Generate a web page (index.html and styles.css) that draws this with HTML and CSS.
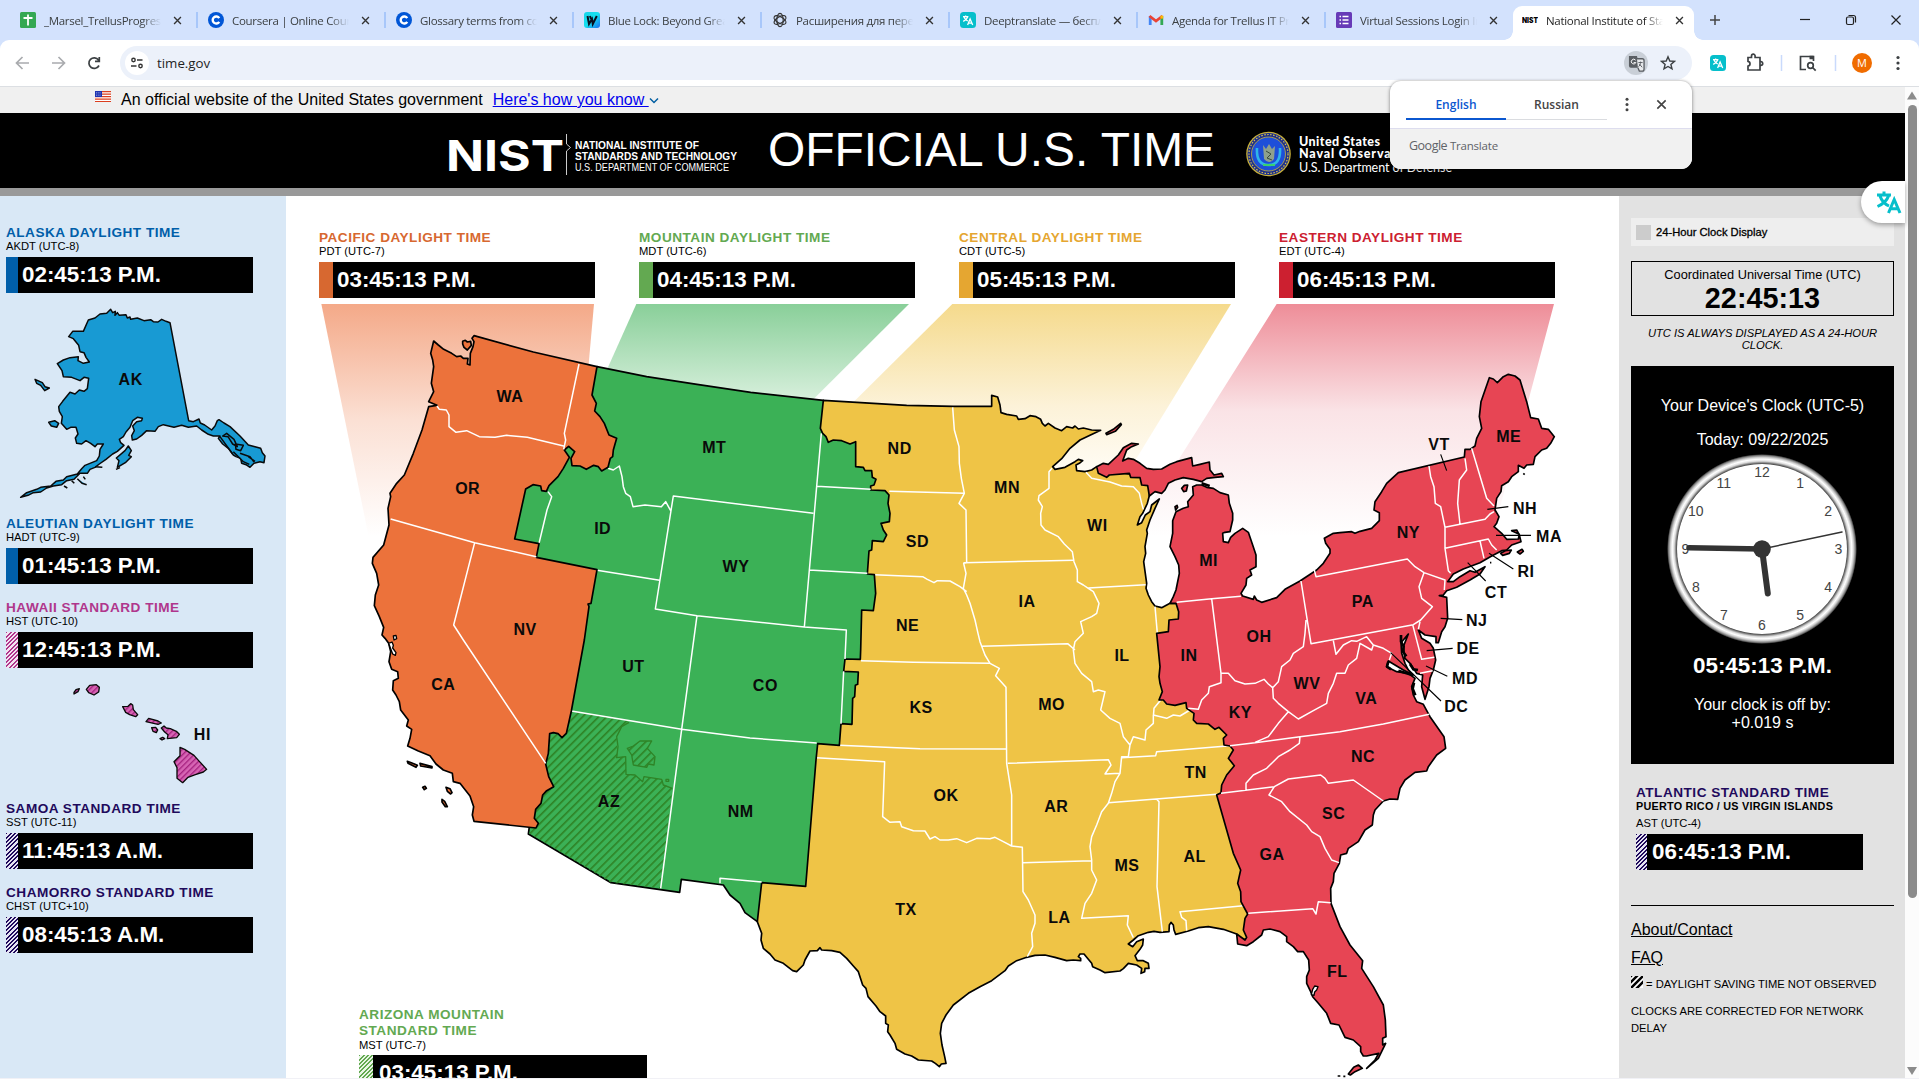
FILE: index.html
```html
<!DOCTYPE html>
<html lang="en">
<head>
<meta charset="utf-8">
<title>National Institute of Standards and Technology | NIST</title>
<link rel="stylesheet" href="styles.css">
</head>
<body>
<svg class="defs" width="0" height="0">
  <defs>
    <symbol id="i-close" viewBox="0 0 10 10"><path d="M1.2 1.2l7.6 7.6M8.8 1.2L1.2 8.8" stroke="currentColor" stroke-width="1.5" fill="none"/></symbol>
    <symbol id="i-coursera" viewBox="0 0 16 16"><circle cx="8" cy="8" r="8" fill="#0156d6"/><path d="M11.2 9.8A3.5 3.5 0 1 1 11.2 6.2" fill="none" stroke="#fff" stroke-width="2.4"/></symbol>
    <symbol id="i-deep" viewBox="0 0 16 16"><rect width="16" height="16" rx="3.5" fill="#06bfcb"/><g fill="none" stroke="#fff" stroke-width="1.3"><path d="M3 4.6h5.4M5.6 3.4v1.2M4 5c.6 1.8 2 3.200 3.800 4M7.600 5C7 7 5.300 8.600 3.200 9.400"/><path d="M7.600 13l2.500-6 2.600 6M8.500 11.200h3.300"/></g></symbol>
    <symbol id="i-dots" viewBox="0 0 4 16"><g fill="currentColor"><circle cx="2" cy="2.500" r="1.600"/><circle cx="2" cy="8" r="1.600"/><circle cx="2" cy="13.500" r="1.600"/></g></symbol>
  </defs>
</svg>

<header class="browser">
  <div class="tabs">
    <div class="tab"><svg class="fav" viewBox="0 0 16 16"><rect width="16" height="16" rx="1.500" fill="#34a853"/><path d="M8 2.500v11M3.500 6h9" stroke="#fff" stroke-width="1.800"/></svg><span class="tab-t">_Marsel_TrellusProgress</span><svg class="x"><use href="#i-close"/></svg></div>
    <div class="tab"><svg class="fav"><use href="#i-coursera"/></svg><span class="tab-t">Coursera | Online Courses</span><svg class="x"><use href="#i-close"/></svg></div>
    <div class="tab"><svg class="fav"><use href="#i-coursera"/></svg><span class="tab-t">Glossary terms from course</span><svg class="x"><use href="#i-close"/></svg></div>
    <div class="tab"><svg class="fav" viewBox="0 0 16 16"><defs><linearGradient id="wg" x2="1" y2="1"><stop stop-color="#18d4e8"/><stop offset=".5" stop-color="#16e0f0"/><stop offset="1" stop-color="#1a6cf0"/></linearGradient></defs><rect width="16" height="16" rx="3" fill="url(#wg)"/><path d="M3.500 4l1.500 8 3-5 .8 5L12.800 4M6 4l1 3" fill="none" stroke="#0a1020" stroke-width="2"/></svg><span class="tab-t">Blue Lock: Beyond Greatest</span><svg class="x"><use href="#i-close"/></svg></div>
    <div class="tab"><svg class="fav" viewBox="0 0 16 16"><g fill="none" stroke="#333" stroke-width="1.200"><ellipse cx="8" cy="8" rx="3.200" ry="6.600"/><ellipse cx="8" cy="8" rx="3.200" ry="6.600" transform="rotate(60 8 8)"/><ellipse cx="8" cy="8" rx="3.200" ry="6.600" transform="rotate(120 8 8)"/></g></svg><span class="tab-t">Расширения для перевода</span><svg class="x"><use href="#i-close"/></svg></div>
    <div class="tab"><svg class="fav"><use href="#i-deep"/></svg><span class="tab-t">Deeptranslate — бесплатный</span><svg class="x"><use href="#i-close"/></svg></div>
    <div class="tab"><svg class="fav" viewBox="0 0 16 16"><path d="M2.200 13V4" stroke="#4285f4" stroke-width="2.800"/><path d="M13.800 13V4" stroke="#34a853" stroke-width="2.800"/><path d="M1.500 4L8 9l6.500-5" stroke="#ea4335" stroke-width="2.800" fill="none"/><path d="M12.400 3.600h2.800v3h-2.800z" fill="#fbbc04"/></svg><span class="tab-t">Agenda for Trellus IT Project</span><svg class="x"><use href="#i-close"/></svg></div>
    <div class="tab last"><svg class="fav" viewBox="0 0 16 16"><rect width="16" height="16" rx="1.500" fill="#673ab7"/><path d="M3.500 4.500h1.500M3.500 8h1.500M3.500 11.500h1.500M6.500 4.500h6M6.500 8h6M6.500 11.500h6" stroke="#fff" stroke-width="1.500"/></svg><span class="tab-t">Virtual Sessions Login Info</span><svg class="x"><use href="#i-close"/></svg></div>
    <div class="tab active"><svg class="fav" viewBox="0 0 16 16"><text x="0" y="11" font-size="7.500" font-weight="900" font-family="Inter" textLength="16" lengthAdjust="spacingAndGlyphs">NIST</text></svg><span class="tab-t">National Institute of Standards</span><svg class="x"><use href="#i-close"/></svg></div>
    <svg class="win" viewBox="0 0 225 40"><g fill="none" stroke="#222" stroke-width="1.200"><path d="M16 20h10M21 15v10" stroke="#444" stroke-width="1.500"/><path d="M106 19.500h10"/><rect x="152.500" y="17" width="7" height="7.500" rx="1.500"/><path d="M154.500 15.500h5q2 0 2 2v5"/><path d="M197.500 15.500l9 9M206.500 15.500l-9 9"/></g></svg>
  </div>
  <div class="toolbar">
    <svg class="nav" viewBox="0 0 120 46"><g fill="none" stroke-width="1.700"><path d="M29 23H17M22.500 17L16.500 23l6 6" stroke="#a9abae"/><path d="M52 23h12M58.500 17l6 6-6 6" stroke="#a9abae"/><path d="M98.500 20A5.300 5.300 0 1 0 99 25.500M99.300 17v4.300H95" stroke="#3c4043"/></g></svg>
    <div class="omni">
      <span class="info"><svg viewBox="0 0 14 14" width="14" height="14"><g fill="none" stroke="#333" stroke-width="1.400"><circle cx="3.500" cy="4" r="1.700"/><path d="M7 4h5.500M1 10h5.500"/><circle cx="10.500" cy="10" r="1.700"/></g></svg></span>
      <span class="url">time.gov</span>
      <span class="tr"><svg viewBox="0 0 18 18" width="17" height="17"><path d="M1 1h8.500l3 12.500H3a2 2 0 0 1-2-2z" fill="#5a5e63"/><path d="M9.500 4H15a2 2 0 0 1 2 2v9a2 2 0 0 1-2 2h-3l-1.500-3.500" fill="#e8eaed" stroke="#5a5e63" stroke-width="1.400"/><path d="M8 5.500A2.500 2.500 0 1 0 8.300 8H6" stroke="#fff" fill="none"/><path d="M11 8h4.500M13.300 7c0 3-1 4.500-2.300 5.500M12 9.500l3 3.500" stroke="#5a5e63" fill="none"/></svg></span>
      <svg class="star" viewBox="0 0 16 16" width="16" height="16"><path d="M8 1.800l1.800 4.200 4.600.4-3.500 3 1.100 4.500L8 11.500l-4 2.400 1.100-4.500-3.500-3 4.600-.4z" fill="none" stroke="#3c4043" stroke-width="1.400"/></svg>
    </div>
    <svg class="ext" viewBox="0 0 227 46"><use href="#i-deep" x="18" y="15" width="16" height="16"/><g fill="none" stroke="#3c4043" stroke-width="1.700"><path d="M56 17.500h3.500V16a1.800 1.800 0 0 1 3.600 0v1.500H68V30H56v-3.800a2.500 2.500 0 0 0 0-4.900z"/><path d="M68 21.500h.8a1.800 1.800 0 0 1 0 3.800H68"/><path d="M114 29.500h-5.500V16.500h13v4.500"/><path d="M117.500 17.500h4" stroke-width="3.500"/><circle cx="118.500" cy="25.500" r="2.800"/><path d="M120.500 27.500l3.200 3.200"/></g><path d="M89.500 15v16M143.500 15v16" stroke="#c9dafc" stroke-width="1.500"/><circle cx="170" cy="23" r="10" fill="#f06c00"/><text x="170" y="27" font-size="11" text-anchor="middle" fill="#fff" font-family="Open Sans">M</text><use href="#i-dots" x="204" y="15" width="4" height="16" color="#3c4043"/></svg>
  </div>
</header>

<div class="viewport">
<div class="page">
  <div class="banner">
    <svg class="flag" viewBox="0 0 16 11"><rect width="16" height="11" fill="#fff"/><path d="M0 .7h16M0 3.200h16M0 5.700h16M0 8.200h16M0 10.500h16" stroke="#db3e1f" stroke-width="1.200"/><rect width="7" height="6" fill="#1e33b1"/><path d="M1 1.500h5M1 3h5M1 4.500h5" stroke="#cdd3f0" stroke-width=".6" stroke-dasharray=".8 1"/></svg>
    <span>An official website of the United States government</span>
    <a class="how" href="#">Here's how you know </a><svg class="chev" viewBox="0 0 10 8"><path d="M1 1.500l4 4 4-4" fill="none" stroke="#005ea2" stroke-width="1.500"/></svg>
  </div>
  <div class="mast">
    <svg class="nist" viewBox="0 0 300 48" fill="#fff" font-family="Liberation Sans">
      <text x="-1" y="38" font-family="Inter" font-size="42.500" font-weight="700" textLength="118" lengthAdjust="spacingAndGlyphs">NIST</text>
      <path d="M119.500 1v10l4 3.500-4 3.500v24" fill="none" stroke="#ccc"/>
      <text x="128" y="16" font-size="11" font-weight="700" textLength="124" lengthAdjust="spacingAndGlyphs">NATIONAL INSTITUTE OF</text>
      <text x="128" y="27" font-size="11" font-weight="700" textLength="162" lengthAdjust="spacingAndGlyphs">STANDARDS AND TECHNOLOGY</text>
      <text x="128" y="38" font-size="10.500" textLength="154" lengthAdjust="spacingAndGlyphs">U.S. DEPARTMENT OF COMMERCE</text>
    </svg>
    <h1>OFFICIAL U.S. TIME</h1>
    <svg class="usno" viewBox="0 0 210 48" fill="#fff" font-family="Lato">
      <circle cx="22.500" cy="24" r="22.300" fill="#c9b13a"/><circle cx="22.500" cy="24" r="21" fill="#1c2f8e"/><circle cx="22.500" cy="24" r="19.500" fill="none" stroke="#d9c24a" stroke-width="1.200" stroke-dasharray="1.500 1.500"/><circle cx="22.500" cy="24" r="17" fill="#1e4fd8" stroke="#c9b13a" stroke-width=".8"/>
      <path d="M11 18q-1 17 11.500 17T34 18" fill="none" stroke="#2fb4e8" stroke-width="2.600"/><path d="M17 15l3 4 3-5 3 5 3-3-1 13q-5 6-10 0z" fill="#8fa08c"/><path d="M20 21l5 3-4 4 5 2" stroke="#3a4a3c" fill="none"/><path d="M17 35h12" stroke="#39d070" stroke-width="2"/>
      <text x="53" y="15.500" font-size="12.500" font-weight="900" textLength="81">United States</text>
      <text x="53" y="27.500" font-size="12.500" font-weight="900" textLength="118">Naval Observatory</text>
      <text x="53" y="41.500" font-size="12.500" textLength="153">U.S. Department of Defense</text>
    </svg>
  </div>
  <div class="cols">
    <aside class="west">
      <section class="clk ak"><h2>ALASKA DAYLIGHT TIME</h2><p>AKDT (UTC-8)</p><div class="time"><i></i>02:45:13 P.M.</div></section>
      <svg class="map-ak" viewBox="0 309 858 666"><g fill="#189ad3" stroke="#0a0a0a" stroke-width="4.500" stroke-linejoin="round">
        <path d="M332 358L338 368 346 364 345 376 352 368 358 376 378 374 382 384 390 381 392 388 412 384 432 392 452 389 460 395 474 396 485 388 498 394 510 398 566 692 580 695 597 687 601 699 614 705 635 720 645 708 652 692 657 689 672 699 690 710 720 738 745 765 765 770 782 775 787 788 795 798 792 818 780 815 762 820 750 832 738 824 725 820 722 805 708 800 700 795 685 775 668 762 655 745 660 738 640 738 625 733 605 720 590 708 565 712 545 706 522 712 490 704 475 710 465 724 440 722 425 736 410 747 397 750 395 737 403 722 398 708 410 695 425 692 427 685 412 682 398 692 390 712 378 726 370 740 358 748 362 758 372 766 352 784 338 792 318 808 298 822 285 832 270 838 262 850 240 850 222 868 200 872 185 884 160 888 140 894 122 906 100 908 84 916 62 922 80 908 110 898 122 892 152 888 168 874 190 870 200 860 232 852 245 836 255 826 290 812 298 798 300 778 310 762 292 762 285 770 272 760 258 752 245 762 230 760 226 744 234 732 228 712 212 712 200 718 184 700 187 680 178 664 176 650 188 634 210 607 225 612 238 600 252 604 262 596 266 565 252 562 240 572 215 562 190 560 186 542 172 521 190 510 210 503 235 500 234 512 250 520 268 516 258 502 252 488 240 485 236 466 220 446 206 440 218 424 250 424 265 390 285 384 300 372 320 370z"/>
        <path d="M385 768l-10 14-26 22 8 8-5 20 24-14 18-18-8-4 8-14z"/><path d="M348 838l12-5"/><path d="M105 568l22 10 8 12 13 4-14 8-12-16-12-6zM146 697l18-5 12 8-6 12-16-4z"/>
        <path d="M680 730l22 18 10 22-14-8-14-22-16-2zM706 762l24 4-8 16-14-4zM660 740l38 52M700 785l30 30 18 8M745 800l20 14M720 790l30 10 12 16M232 866l14 14 14 4M215 872l8 8M192 888l10 6M285 830l22 2M250 860l6 8"/>
      </g><text class="st" x="392" y="585">AK</text></svg>
      <section class="clk al"><h2>ALEUTIAN DAYLIGHT TIME</h2><p>HADT (UTC-9)</p><div class="time"><i></i>01:45:13 P.M.</div></section>
      <section class="clk hi gap"><h2>HAWAII STANDARD TIME</h2><p>HST (UTC-10)</p><div class="time"><i></i>12:45:13 P.M.</div></section>
      <svg class="map-hi" viewBox="0 264 858 396"><defs><pattern id="hp" width="12" height="12" patternUnits="userSpaceOnUse" patternTransform="rotate(45)"><rect width="12" height="12" fill="#d765b4"/><rect width="4" height="12" fill="#a5217f"/></pattern></defs><g fill="url(#hp)" stroke="#0a0a0a" stroke-width="4" stroke-linejoin="round">
        <path d="M222 337l6-8 10-3-4 9-12 7zM259 328l10-12 20-2 9 8-2 14-14 9-16-7zM368 380l16-1 8-8 6 4 2 14 13 15-6 6-18-6-12-7zM438 425l8-10 28 8 10 6-10 4zM455 443l12-1 6 8-4 8-10-4zM480 476l8-4 6 4-8 4zM484 444l8-6 7 6 12 2 18 8 9 9-8 10-28 3 2-12-10-8zM540 502l14 6 28 18 16 18 22 24-10 8-24 8-22 8-16 16-17-13 0-32-9-18 18-18z"/>
      </g><text class="st" x="607" y="480">HI</text></svg>
      <section class="clk sa"><h2>SAMOA STANDARD TIME</h2><p>SST (UTC-11)</p><div class="time"><i></i>11:45:13 A.M.</div></section>
      <section class="clk sa gap"><h2>CHAMORRO STANDARD TIME</h2><p>CHST (UTC+10)</p><div class="time"><i></i>08:45:13 A.M.</div></section>
    </aside>

    <main class="conus">
      <div class="row">
        <section class="clk pa"><h2>PACIFIC DAYLIGHT TIME</h2><p>PDT (UTC-7)</p><div class="time"><i></i>03:45:13 P.M.</div></section>
        <section class="clk mo"><h2>MOUNTAIN DAYLIGHT TIME</h2><p>MDT (UTC-6)</p><div class="time"><i></i>04:45:13 P.M.</div></section>
        <section class="clk ce"><h2>CENTRAL DAYLIGHT TIME</h2><p>CDT (UTC-5)</p><div class="time"><i></i>05:45:13 P.M.</div></section>
        <section class="clk ea"><h2>EASTERN DAYLIGHT TIME</h2><p>EDT (UTC-4)</p><div class="time"><i></i>06:45:13 P.M.</div></section>
      </div>
      <svg class="map" viewBox="858 912 3999 2322">
        <defs>
          <linearGradient id="gp" gradientUnits="userSpaceOnUse" x1="0" y1="912" x2="0" y2="1610"><stop stop-color="#f4a988"/><stop offset=".5" stop-color="#fbe0d4"/><stop offset="1" stop-color="#fff"/></linearGradient>
          <linearGradient id="gm" gradientUnits="userSpaceOnUse" x1="0" y1="912" x2="0" y2="1195"><stop stop-color="#89cf99"/><stop offset="1" stop-color="#d6efdb"/></linearGradient>
          <linearGradient id="gc" gradientUnits="userSpaceOnUse" x1="0" y1="912" x2="0" y2="1420"><stop stop-color="#f5da8c"/><stop offset=".6" stop-color="#fcf2d8"/><stop offset="1" stop-color="#fffcf5"/></linearGradient>
          <linearGradient id="ge" gradientUnits="userSpaceOnUse" x1="0" y1="912" x2="0" y2="1610"><stop stop-color="#ee8d98"/><stop offset=".46" stop-color="#fae3e6"/><stop offset="1" stop-color="#fff"/></linearGradient>
          <pattern id="azp" width="17" height="17" patternUnits="userSpaceOnUse" patternTransform="rotate(45)"><rect width="5" height="17" fill="#2f8427"/></pattern>
        </defs>
        <path fill="url(#gp)" d="M964 912H1782L1720 1610H1106z"/><path fill="url(#gm)" d="M1909 912H2727L2438 1200 1780 1200z"/><path fill="url(#gc)" d="M2857 912H3693L3394 1400 3370 1420H2345z"/><path fill="url(#ge)" d="M3830 912H4662L4490 1560 4480 1610H3390z"/>
        <g stroke="#000" stroke-width="5" stroke-linejoin="round">
          <path fill="#efc446" d="M2470 1201L2520 1204 2720 1216 2860 1219 2975 1219 2975 1186 2993 1191 3000 1215 3003 1238 3020 1243 3050 1248 3055 1258 3075 1256 3090 1247 3108 1250 3122 1258 3127 1270 3135 1278 3145 1270 3165 1284 3185 1292 3200 1280 3218 1284 3225 1278 3235 1287 3250 1284 3275 1290 3302 1291 3270 1306 3240 1320 3210 1345 3185 1376 3158 1400 3165 1408 3195 1402 3225 1385 3235 1378 3248 1382 3238 1390 3228 1395 3230 1412 3255 1415 3275 1410 3290 1400 3310 1410 3440 1430 3450 1480 3442 1510 3428 1540 3420 1550 3412 1575 3425 1568 3436 1545 3450 1535 3455 1515 3478 1497 3465 1525 3450 1560 3440 1590 3442 1600 3435 1640 3437 1660 3431 1685 3440 1750 3438 1765 3445 1785 3455 1805 3465 1818 3485 1823 3510 1810 3528 1810 3600 1900 3600 2100 3640 2130 3720 2180 3740 2300 3700 2450 3730 2600 3770 2740 3755 2810 3730 2820 3710 2802 3670 2788 3625 2780 3595 2783 3565 2793 3527 2803 3522 2790 3520 2775 3513 2767 3508 2775 3507 2795 3480 2797 3462 2794 3445 2797 3415 2807 3400 2820 3385 2832 3398 2840 3410 2825 3430 2817 3428 2835 3420 2848 3405 2867 3412 2882 3430 2882 3445 2890 3447 2905 3435 2905 3434 2915 3423 2920 3425 2905 3410 2895 3385 2890 3370 2906 3360 2913 3315 2918 3300 2910 3278 2900 3275 2890 3260 2872 3252 2862 3240 2862 3235 2870 3242 2875 3242 2882 3220 2880 3200 2882 3165 2872 3135 2865 3105 2866 3080 2872 3050 2882 3025 2898 3015 2912 2975 2942 2940 2960 2905 2980 2860 3015 2838 3045 2825 3070 2821 3100 2826 3135 2834 3170 2838 3190 2824 3192 2818 3200 2806 3190 2795 3183 2755 3180 2735 3168 2715 3162 2690 3148 2685 3130 2670 3105 2663 3095 2665 3075 2657 3070 2657 3048 2640 3035 2628 3018 2604 2990 2598 2965 2588 2955 2575 2915 2560 2898 2540 2875 2520 2857 2495 2852 2465 2850 2460 2843 2452 2852 2430 2853 2415 2880 2410 2895 2390 2915 2378 2912 2350 2890 2325 2880 2310 2862 2290 2845 2283 2820 2285 2800 2272 2765 2265 2700 2300 2600 2400 2200 2450 1950 2480 1500 2430 1300z"/>
          <g class="wl"><path d="M2858 1222L2863 1290 2877 1340 2878 1390 2884 1435 2893 1480 2877 1510 2898 1530 2900 1688 2891 1690 2898 1720 2890 1765 2900 1785 2910 1810 2925 1860 2934 1900 2940 1925 2955 1965 2970 1990 2998 2005 2987 2027 3018 2062 3020 2290 3035 2385 3035 2538M2668 1474L2893 1480M2623 1724L2768 1730 2782 1738 2802 1748 2812 1742 2850 1743 2880 1760 2900 1775M2891 1688L3222 1681M2945 1939L3203 1931 3225 1950"/>
          <path d="M3156 1405L3147 1415 3147 1465 3117 1487 3115 1500 3127 1520 3122 1540 3123 1575 3135 1590 3175 1610 3193 1632 3217 1655 3222 1685 3232 1710 3232 1745 3250 1755 3265 1765 3280 1775 3297 1810 3290 1840 3275 1850 3242 1865 3250 1900 3225 1925 3220 1950 3225 1990 3245 2020 3275 2045 3280 2075 3295 2070 3315 2075 3302 2130 3330 2155 3360 2170 3370 2210 3390 2235 3385 2270 3365 2270 3360 2320 3345 2345 3335 2380 3325 2410 3305 2435 3290 2475 3275 2510 3270 2540 3275 2580 3275 2610 3290 2640 3275 2680 3255 2710 3245 2755 3385 2747 3382 2775 3400 2813M3265 1764L3437 1754M3258 1417L3275 1435 3330 1446 3365 1458 3400 1460 3418 1480 3425 1510 3430 1528M3465 1820L3472 1900M2583 1982L2740 1987 2970 1990M2518 2236L2760 2246 3020 2247M2450 2273L2654 2285 2648 2450 2670 2467 2700 2465 2705 2480 2740 2492 2775 2493 2790 2517 2805 2510 2820 2520 2845 2520 2870 2516 2900 2528 2930 2515 2970 2516 2985 2512 3010 2525 3035 2538 3067 2542 3069 2675 3085 2700 3105 2745 3105 2770 3095 2800 3098 2840 3082 2870M3023 2290L3325 2279 3333 2295 3315 2322 3360 2320M3069 2588L3275 2582M3325 2408L3650 2383M3470 2398L3477 2405 3471 2660 3487 2795M3730 2717L3540 2735 3545 2752 3558 2762 3560 2792M3365 2273L3467 2267 3470 2255 3690 2237M3390 2235L3400 2210 3435 2220 3438 2190 3460 2170 3460 2145 3500 2155 3520 2145 3540 2148 3570 2130M3482 2100L3462 2125 3460 2150"/></g>
          <path fill="#3bb156" d="M1791 1100L1940 1130 2091 1153 2252 1177 2470 1201 2461 1285 2468 1300 2478 1310 2485 1327 2500 1320 2525 1322 2550 1332 2567 1325 2567 1400 2590 1402 2595 1412 2615 1412 2617 1432 2628 1438 2622 1455 2612 1458 2612 1470 2655 1472 2667 1485 2664 1510 2670 1540 2668 1565 2643 1570 2650 1590 2660 1605 2650 1625 2617 1622 2615 1650 2607 1653 2602 1722 2623 1724 2627 1780 2620 1832 2585 1830 2582 1950 2581 1978 2535 1977 2531 2014 2575 2016 2573 2053 2566 2056 2564 2090 2558 2095 2556 2173 2523 2171 2518 2236 2453 2231 2448 2280 2417 2659 2285 2648 2272 2765 2235 2738 2220 2710 2190 2685 2170 2655 2044 2638 2039 2677 1833 2648 1585 2502 1588 2480 1560 2440 1590 2200 1500 1640 1500 1440 1640 1300 1750 1300 1760 1120z"/>
          <path fill="url(#azp)" stroke="none" d="M1714 2133L1887 2163 1865 2180 1850 2210 1852 2270 1877 2270 1878 2323 1905 2325 1928 2345 1932 2330 1985 2338 1995 2355 2017 2365 1982 2665 1833 2648 1588 2500 1580 2300zM1920 2223L1955 2223 1942 2245 1965 2270 1962 2295 1945 2292 1940 2302 1900 2295 1895 2265 1882 2245 1900 2238z"/>
          <path fill="none" stroke="#2f8427" stroke-width="4" d="M1887 2167L1865 2180 1850 2210 1854 2240 1850 2273 1877 2270 1878 2323 1905 2325 1928 2345 1932 2330 1985 2338 1990 2355 2017 2365M1920 2223L1955 2223 1942 2245 1965 2270 1962 2295 1945 2292 1940 2302 1900 2295 1895 2265 1882 2245 1900 2238zM1998 2338h8v6h-8z"/>
          <g class="wl"><path d="M1644 1475L1655 1490 1641 1530 1617 1630M1824 1405L1840 1410 1858 1398 1866 1430 1870 1460 1877 1480 1891 1490 1899 1520 1935 1515 1984 1520 1997 1505 2012 1532M2440 1540L2020 1488 1966 1827 2091 1847 2413 1881 2539 1890 2535 1977M1791 1711L1979 1741M2464 1300L2413 1881M2450 1459L2612 1468M2426 1710L2602 1720M2531 2014L2523 2171M2091 1847L2045 2188 1982 2665M1714 2133L2045 2188 2250 2214 2450 2229M2160 2650L2160 2635 2285 2646"/></g>
          <path fill="#ec723b" d="M1422 1007L1600 1056 1791 1100 1776 1185 1789 1210 1784 1233 1800 1250 1813 1270 1827 1305 1850 1315 1840 1350 1838 1370 1831 1375 1824 1402 1805 1413 1795 1400 1781 1396 1759 1408 1740 1398 1716 1397 1713 1375 1724 1355 1706 1339 1693 1350 1708 1372 1690 1405 1674 1430 1647 1457 1639 1474 1625 1472 1622 1458 1599 1454 1577 1467 1544 1617 1617 1631 1609 1672 1791 1709 1773 1810 1764 1812 1767 1820 1753 1920 1714 2133 1699 2200 1686 2213 1674 2201 1660 2198 1649 2201 1645 2260 1637 2292 1646 2330 1661 2360 1640 2372 1628 2385 1623 2410 1607 2428 1603 2455 1615 2470 1608 2484 1422 2464 1417 2445 1421 2420 1410 2388 1380 2350 1360 2345 1357 2320 1330 2310 1308 2292 1290 2267 1255 2253 1223 2238 1230 2215 1235 2188 1220 2178 1225 2160 1202 2130 1198 2105 1188 2085 1178 2070 1180 2042 1195 2035 1193 2015 1175 2008 1167 1985 1172 1955 1166 1930 1155 1915 1146 1905 1151 1882 1138 1850 1123 1817 1126 1785 1136 1755 1130 1720 1117 1690 1119 1672 1151 1635 1167 1575 1164 1525 1172 1490 1170 1480 1190 1450 1213 1425 1240 1360 1266 1290 1286 1220 1311 1216 1286 1205 1301 1175 1294 1150 1301 1100 1298 1080 1292 1060 1301 1023 1315 1035 1331 1048 1355 1060 1370 1070 1382 1068 1390 1075 1404 1075 1402 1092 1410 1095 1411 1060 1419 1040 1422 1025 1416 1015z"/>
          <path fill="#ec723b" d="M1388 1024l8-3 6 5 10-2 2 12-12 14-10-8-4-10zM1222 2284l12 4 18 8-4 6-24-12zM1260 2290l36 10 0 4-34-6zM1338 2362l12 4 6 12-4 4-10-8zM1326 2398l8 6 8 16-6 0-10-14zM1268 2362l7-3 4 6-6 4z"/>
          <path fill="#fff" stroke-width="4" d="M1166 1930l10-4 4 10-2 8 10 14-2 8-8-4-6-16zM1180 1908l8-2 2 10-8 4z"/>
          <g class="wl"><path d="M1737 1092L1693 1300 1697 1320 1691 1348M1311 1218L1318 1228 1339 1230 1347 1245 1347 1280 1368 1297 1400 1292 1438 1310 1485 1312 1520 1306 1582 1312 1691 1338M1172 1557L1424 1628 1609 1670M1424 1628L1361 1875 1390 1920 1637 2290"/></g>
          <path fill="#e74554" d="M3290 1400L3310 1390 3325 1393 3355 1365 3370 1343 3395 1330 3415 1332 3395 1340 3380 1350 3368 1383 3385 1375 3400 1378 3420 1390 3440 1405 3460 1408 3485 1407 3510 1393 3530 1385 3575 1373 3578 1398 3600 1393 3628 1386 3630 1410 3642 1425 3665 1420 3670 1430 3645 1432 3620 1435 3605 1445 3580 1438 3550 1433 3525 1440 3505 1450 3495 1470 3485 1480 3465 1475 3448 1488 3443 1457 3425 1455 3420 1433 3392 1432 3388 1420 3328 1425 3320 1432 3295 1420zM3318 1300l22-12 22-18 2 4-18 20-26 10zM3545 1465l8-9 10-1-4 18-8 2zM3525 1520l6-4 2 6-6 8z"/>
          <path fill="#e74554" d="M3528 1810L3510 1810 3520 1790 3528 1770 3538 1720 3536 1695 3525 1670 3510 1640 3518 1600 3518 1562 3528 1535 3550 1525 3565 1520 3563 1505 3580 1485 3578 1460 3590 1455 3605 1455 3620 1462 3640 1465 3660 1478 3685 1485 3688 1510 3698 1540 3698 1560 3690 1595 3675 1597 3668 1600 3670 1625 3685 1628 3692 1612 3705 1600 3728 1585 3745 1597 3758 1635 3768 1665 3768 1700 3750 1710 3755 1725 3740 1735 3738 1755 3723 1780 3728 1788 3760 1798 3763 1788 3770 1800 3785 1807 3830 1793 3855 1768 3900 1743 3950 1710 3970 1690 3990 1660 3990 1648 3977 1630 3973 1615 4000 1600 4020 1598 4055 1595 4065 1600 4080 1594 4115 1585 4138 1562 4138 1538 4122 1530 4125 1505 4145 1475 4160 1450 4195 1418 4393 1371 4395 1348 4410 1348 4425 1338 4430 1315 4445 1285 4438 1250 4443 1205 4468 1133 4480 1137 4492 1148 4510 1130 4525 1123 4545 1128 4560 1140 4580 1205 4592 1253 4615 1257 4625 1285 4645 1288 4663 1310 4652 1330 4640 1345 4625 1350 4605 1370 4600 1393 4580 1395 4572 1405 4555 1396 4555 1415 4535 1430 4525 1445 4505 1457 4503 1475 4490 1495 4485 1530 4497 1550 4490 1570 4482 1580 4505 1600 4520 1618 4555 1617 4558 1603 4535 1592 4550 1590 4558 1605 4563 1625 4535 1635 4520 1650 4505 1652 4475 1668 4440 1688 4390 1707 4360 1722 4343 1745 4360 1745 4380 1730 4410 1712 4425 1717 4455 1700 4440 1722 4410 1740 4370 1762 4340 1772 4330 1785 4318 1787 4340 1792 4343 1855 4335 1880 4325 1895 4315 1928 4308 1928 4308 1910 4275 1905 4255 1890 4265 1915 4290 1930 4300 1945 4307 1980 4300 2010 4290 2035 4287 2060 4275 2098 4265 2060 4268 2025 4250 2020 4240 2005 4230 1990 4215 1975 4210 1940 4225 1902 4203 1928 4205 1960 4215 1990 4225 2010 4240 2025 4210 2010 4190 1998 4165 1983 4160 2000 4190 2015 4225 2020 4245 2035 4235 2060 4240 2085 4250 2105 4270 2113 4290 2150 4332 2210 4337 2245 4310 2265 4285 2300 4280 2313 4245 2317 4215 2340 4200 2365 4193 2398 4170 2397 4150 2403 4125 2430 4120 2445 4117 2475 4095 2490 4075 2525 4045 2545 4040 2560 4022 2565 4018 2590 4002 2620 4000 2645 3992 2665 3993 2710 4020 2780 4050 2835 4088 2882 4085 2905 4120 2960 4150 3015 4156 3060 4158 3110 4148 3115 4148 3135 4157 3130 4135 3175 4100 3205 4125 3180 4136 3160 4100 3168 4090 3168 4082 3155 4082 3140 4060 3120 4035 3112 4017 3075 3992 3070 3980 3040 3955 3010 3938 2990 3932 2975 3920 2950 3920 2930 3928 2910 3926 2880 3910 2855 3893 2855 3880 2840 3860 2825 3860 2810 3840 2795 3810 2787 3790 2790 3785 2805 3760 2825 3740 2837 3713 2832 3710 2802 3735 2820 3740 2812 3730 2790 3735 2755 3743 2742 3723 2705 3722 2675 3713 2650 3722 2610 3700 2560 3680 2490 3650 2385 3663 2378 3665 2355 3680 2325 3703 2297 3685 2275 3700 2250 3690 2238 3672 2235 3670 2215 3680 2205 3657 2182 3645 2188 3625 2172 3590 2170 3580 2160 3582 2140 3560 2125 3558 2108 3525 2116 3500 2112 3490 2100 3477 2100 3487 2075 3480 2050 3477 2030 3480 2000 3470 1900 3505 1895 3507 1860 3535 1857 3536 1835z"/>
          <path fill="#fff" stroke-width="4" d="M3934 2984l4-16 6-10 10 2-4 10-6 6-2 10z"/>
          <path fill="#e74554" d="M4045 3222l16-20 14-7 12 10-22 10-14 10zM4013 3228h8M4030 3229h6M4502 1660l14-8 18-2-6 10-20 6zM4552 1656l14-8 4 6-10 8zM4470 1688h4M4570 1420l4 4"/>
          <path fill="none" stroke-width="8" d="M4203 1905v20l8 14-2 16 10 14M4165 1985l-4 15 12 8M4195 2012l44 14M4230 1992l10 16 14 2M3605 1450l24 8M4242 2048l-4 18 8 20"/>
          <g class="wl"><path d="M3530 1807L3635 1796 3723 1789M3635 1796L3663 2020M3565 2125L3595 2128 3605 2100 3625 2080 3628 2060 3663 2048 3663 2020 3685 2020 3705 2042 3735 2052 3765 2050 3792 2038 3805 2052 3818 2063 3835 2045 3845 2000 3870 1980 3880 1960 3910 1940 3915 1900 3918 1860M3903 1743L3933 1931 4240 1874 4262 1860 4297 1820 4265 1795 4257 1760 4272 1718M3943 1710L3948 1730 4222 1677 4245 1700 4272 1718 4335 1740 4333 1770M4260 1865L4255 1888M4238 1874L4265 1978 4303 1972M4287 1398L4292 1430 4302 1460 4306 1510 4322 1520 4335 1582 4335 1645 4345 1712 4352 1720M4395 1375L4400 1410 4378 1440 4373 1510 4380 1572M4335 1582L4455 1558 4470 1542 4482 1535M4415 1345L4460 1495 4482 1518M4335 1645L4465 1617 4475 1635 4490 1650M4440 1623L4452 1675M4000 1922L4008 1963 4030 1935 4055 1922 4070 1924 4100 1910 4112 1925 4120 1935 4115 1950 4080 1930 4070 1975 4045 1995 4035 2020 4010 2020 4000 2050 3985 2080 3980 2110 3940 2132 3895 2157 3865 2135 3835 2110 3820 2095 3818 2063M3865 2135L3835 2170 3820 2190 3805 2210 3765 2227M4120 1935L4150 1945 4175 1960 4168 1980M3690 2237L3765 2228 3900 2210 4020 2195 4150 2172 4288 2143M3900 2210L3898 2230 3870 2250 3835 2270 3800 2305 3760 2325 3738 2350 3738 2370M3663 2380L3823 2360 3865 2337 3962 2325 3975 2335 3985 2350 4060 2340 4150 2403M3823 2360L3807 2385 3845 2405 3870 2435 3920 2475 3935 2495 3960 2510 3975 2545 3995 2580 4017 2588M3745 2740L3938 2726 3948 2742 3955 2705 3992 2708M4260 2020L4298 2012"/></g>
        </g>
        <path fill="none" stroke="#000" stroke-width="3.500" d="M4322 1363L4340 1412M4462 1528L4525 1520M4488 1606H4593M4467 1660L4540 1707M4403 1688L4457 1743M4322 1855L4387 1859M4280 1952L4358 1945M4278 1998L4342 2029M4172 1958L4323 2103"/>
        <g class="st"><text x="1530" y="1205">WA</text><text x="1403" y="1483">OR</text><text x="1808" y="1602">ID</text><text x="2143" y="1360">MT</text><text x="2208" y="1716">WY</text><text x="1575" y="1906">NV</text><text x="1330" y="2070">CA</text><text x="1900" y="2017">UT</text><text x="2296" y="2072">CO</text><text x="1827" y="2420">AZ</text><text x="2222" y="2452">NM</text><text x="2699" y="1363">ND</text><text x="3021" y="1478">MN</text><text x="2752" y="1640">SD</text><text x="3292" y="1592">WI</text><text x="3081" y="1821">IA</text><text x="2723" y="1894">NE</text><text x="3626" y="1697">MI</text><text x="2763" y="2140">KS</text><text x="3155" y="2130">MO</text><text x="3366" y="1984">IL</text><text x="2838" y="2402">OK</text><text x="3169" y="2435">AR</text><text x="3587" y="2334">TN</text><text x="3721" y="2155">KY</text><text x="2718" y="2744">TX</text><text x="3178" y="2769">LA</text><text x="3381" y="2613">MS</text><text x="3584" y="2587">AL</text><text x="3567" y="1982">IN</text><text x="3777" y="1925">OH</text><text x="4088" y="1820">PA</text><text x="4225" y="1614">NY</text><text x="4526" y="1325">ME</text><text x="4317" y="1350">VT</text><text x="4575" y="1542">NH</text><text x="4647" y="1626">MA</text><text x="4578" y="1731">RI</text><text x="4488" y="1793">CT</text><text x="4430" y="1878">NJ</text><text x="4404" y="1963">DE</text><text x="4395" y="2053">MD</text><text x="4369" y="2137">DC</text><text x="3921" y="2066">WV</text><text x="4099" y="2111">VA</text><text x="4089" y="2285">NC</text><text x="4001" y="2457">SC</text><text x="3816" y="2580">GA</text><text x="4012" y="2932">FL</text></g>
      </svg>
      <section class="clk az"><h2>ARIZONA MOUNTAIN<br>STANDARD TIME</h2><p>MST (UTC-7)</p><div class="time"><i></i>03:45:13 P.M.</div></section>
    </main>

    <aside class="east">
      <label class="chk"><i></i>24-Hour Clock Display</label>
      <div class="utc"><span>Coordinated Universal Time (UTC)</span><b>22:45:13</b></div>
      <em>UTC IS ALWAYS DISPLAYED AS A 24-HOUR CLOCK.</em>
      <div class="device">
        <p class="dv1">Your Device's Clock (UTC-5)</p>
        <p class="dv2">Today: 09/22/2025</p>
        <svg class="face" viewBox="-96 -96 192 192">
          <defs><radialGradient id="rim" gradientUnits="userSpaceOnUse" cx="0" cy="0" r="95"><stop offset=".895" stop-color="#444"/><stop offset=".925" stop-color="#ddd"/><stop offset=".945" stop-color="#fff"/><stop offset=".965" stop-color="#ccc"/><stop offset=".985" stop-color="#777"/><stop offset="1" stop-color="#000"/></radialGradient></defs>
          <circle r="95" fill="url(#rim)"/><circle r="85" fill="#fff"/>
          <g class="num"><text x="0" y="-72">12</text><text x="38.200" y="-61.500">1</text><text x="66.200" y="-33.500">2</text><text x="76.500" y="5">3</text><text x="66.200" y="43">4</text><text x="38.200" y="71">5</text><text x="0" y="81">6</text><text x="-38.200" y="71">7</text><text x="-66.200" y="43">8</text><text x="-76.500" y="5">9</text><text x="-66.200" y="-33.500">10</text><text x="-38.200" y="-61.500">11</text></g>
          <g stroke="#333" stroke-linecap="round"><path d="M0 0L-73-1.300" stroke-width="5.500"/><path d="M0 0L5.800 44.500" stroke-width="6"/><path d="M0 0L80-17" stroke-width="1.500"/></g><circle r="8.800" fill="#333"/>
        </svg>
        <b class="dt">05:45:13 P.M.</b>
        <p class="dv3">Your clock is off by:<br>+0.019 s</p>
      </div>
      <section class="clk at"><h2>ATLANTIC STANDARD TIME</h2><h3>PUERTO RICO / US VIRGIN ISLANDS</h3><p>AST (UTC-4)</p><div class="time"><i></i>06:45:13 P.M.</div></section>
      <hr>
      <a class="lnk" href="#">About/Contact</a>
      <a class="lnk" href="#">FAQ</a>
      <p class="note"><svg viewBox="0 0 12 12" width="12" height="12"><rect width="12" height="12" fill="#fff"/><path d="M-1 7l8-8M-1 13l14-14M5 13l8-8M-3 3l6-6" stroke="#000" stroke-width="2.500"/></svg><span>= DAYLIGHT SAVING TIME NOT OBSERVED</span></p>
      <p class="note2">CLOCKS ARE CORRECTED FOR NETWORK DELAY</p>
    </aside>
  </div>
</div>
<div class="scroll"><svg viewBox="0 0 14 991"><path d="M2 12.500l5-8 5 8zM2 980l5 8 5-8z" fill="#8b8b8b"/><rect x="3" y="18" width="9" height="793" rx="4.500" fill="#8b8b8b"/></svg></div>
<div class="fab"><svg viewBox="0 0 26 24" width="26" height="24"><g fill="none" stroke="#06bfcb" stroke-width="3"><path d="M1 5h14M8 1.500V5M4 6c1.500 4.500 4.500 8 9 10M12.500 6C11 10.500 7 14 1.500 16.500"/><path d="M12.500 23l5.700-13.500L24 23M14.500 18.800h7.500"/></g></svg></div>
</div>

<div class="popup">
  <div class="pop-top"><span class="lang on">English</span><span class="lang">Russian</span><svg class="pd"><use href="#i-dots"/></svg><svg class="px"><use href="#i-close"/></svg></div>
  <div class="pop-bot"><span>Google</span> Translate</div>
</div>
</body>
</html>
```
FILE: styles.css
```css
* { box-sizing: border-box; margin: 0; padding: 0; }
html, body { width: 1919px; height: 1079px; overflow: hidden; }
body { position: relative; display: flex; flex-direction: column; background: #f1f1f6; font-family: "Liberation Sans", Arial, sans-serif; color: #000; }
.defs { position: absolute; }
svg { display: block; }

/* browser chrome */
.browser { flex: none; height: 87px; background: #d3e2fd; font-family: "Open Sans", "Noto Sans", sans-serif; }
.tabs { display: flex; height: 40px; padding-left: 9px; }
.tab { position: relative; display: flex; align-items: center; width: 188px; height: 40px; padding-left: 11px; gap: 8px; font-size: 11.5px; color: #3c4043; }
.tab::after { content: ""; position: absolute; right: -1px; top: 12px; width: 2px; height: 16px; background: #a8c7fa; }
.tab.last::after, .tab.active::after { display: none; }
.tab .fav { width: 16px; height: 16px; flex: none; }
.tab-t { width: 117px; overflow: hidden; white-space: nowrap; letter-spacing: -.3px; -webkit-mask-image: linear-gradient(90deg, #000 84%, transparent); mask-image: linear-gradient(90deg, #000 84%, transparent); }
.tab .x { width: 9px; height: 9px; margin-left: 4px; color: #333; flex: none; }
.tab.last + .active { width: 181px; height: 34px; margin-top: 6px; padding: 0 0 6px 9px; background: #fff; border-radius: 9px 9px 0 0; color: #1f1f1f; }
.tab.active::before { content: ""; position: absolute; left: -9px; right: -9px; bottom: 0; height: 9px; background: radial-gradient(circle at 0 0, transparent 8.500px, #fff 9px) 0 0 / 9px 9px no-repeat, radial-gradient(circle at 100% 0, transparent 8.500px, #fff 9px) 100% 0 / 9px 9px no-repeat; }
.win { width: 225px; height: 40px; }
.toolbar { display: flex; align-items: center; height: 47px; background: #fff; border-bottom: 1px solid #dcdfe3; border-radius: 9px 9px 0 0; }
.nav { width: 120px; height: 46px; }
.omni { display: flex; align-items: center; width: 1572px; height: 34px; border-radius: 17px; background: #ecf1fa; padding: 0 16px 0 5px; }
.info { display: flex; align-items: center; justify-content: center; width: 24px; height: 24px; border-radius: 50%; background: #fff; }
.url { flex: 1; margin-left: 8px; font-size: 13.3px; color: #1f1f1f; }
.tr { display: flex; align-items: center; justify-content: center; width: 24px; height: 24px; border-radius: 50%; background: #c9cfd7; margin-right: 12px; }
.ext { width: 227px; height: 46px; }

/* page */
.viewport { position: relative; flex: none; display: flex; height: 991px; background: #fff; }
.page { width: 1905px; display: flex; flex-direction: column; overflow: hidden; }
.scroll { width: 14px; background: #fcfcfc; }
.scroll svg { width: 14px; height: 991px; }
.banner { display: flex; flex: none; height: 26px; padding-left: 95px; background: #f0f0f0; font-size: 16px; line-height: 25px; }
.flag { width: 16px; height: 11px; margin: 4px 10px 0 0; }
.how { margin-left: 10px; color: #00e; white-space: pre; }
.chev { width: 10px; height: 8px; margin-top: 10px; }
.mast { display: flex; flex: none; height: 83px; background: #000; border-bottom: 8px solid #999; padding-left: 447px; color: #fff; }
.nist { width: 300px; height: 48px; margin-top: 20px; }
.mast h1 { width: 499px; padding-left: 21px; font-weight: 400; font-size: 47.9px; line-height: 55px; padding-top: 9px; white-space: nowrap; }
.usno { width: 210px; height: 48px; margin-top: 17px; }
.cols { display: flex; flex: 1; min-height: 0; }

.west { width: 286px; background: #d9e8f6; padding-top: 28px; }
.west .clk { margin-left: 6px; width: 247px; }
.west .gap { margin-top: 15px; }
.map-ak { width: 286px; height: 222px; }
.map-hi { width: 286px; height: 132px; }

.clk h2 { font-size: 13.6px; line-height: 17px; margin-bottom: -1px; letter-spacing: .5px; white-space: nowrap; }
.clk p { font-size: 11.2px; line-height: 13px; }
.time { display: flex; height: 36px; margin-top: 4px; background: #000; color: #fff; font-weight: 700; font-size: 22.4px; line-height: 36px; white-space: pre; }
.time i { width: 12px; margin-right: 4px; }
.ak h2, .al h2 { color: #005ea9; } .ak i, .al i { background: #005ea9; }
.hi h2 { color: #b0368c; } .hi i { background: repeating-linear-gradient(135deg, #b0368c 0 1.300px, #f3e3f1 1.300px 3px); }
.sa h2, .at h2 { color: #1f0a5c; } .sa i, .at i { background: repeating-linear-gradient(135deg, #1f0a5c 0 1.300px, #e6e4f2 1.300px 3px); }
.pa h2 { color: #d76830; } .pa i { background: #d76830; }
.mo h2, .az h2 { color: #63a951; } .mo i { background: #63a951; }
.ce h2 { color: #e5a631; } .ce i { background: #e5a631; }
.ea h2 { color: #cc2030; } .ea i { background: #cc2030; }
.az i { background: repeating-linear-gradient(135deg, #63a951 0 1.300px, #e9f5e6 1.300px 3px); }

.conus { position: relative; width: 1333px; background: #fff; }
.row { display: flex; gap: 44px; padding: 33px 0 0 33px; }
.row .clk { width: 276px; }
.row i, .az i { width: 14px; }
.map { width: 1333px; height: 774px; margin-top: 6px; }
.az { position: absolute; left: 73px; top: 811px; width: 288px; }
.az h2 { line-height: 16px; margin-bottom: 0; }
.az .time { margin-top: 3px; }
.az .time i { margin-right: 6px; }
.wl { fill: none; stroke: #fff; stroke-width: 4.500px; }
.st { font: 700 48px "Liberation Sans", Arial, sans-serif; letter-spacing: 1.500px; text-anchor: middle; fill: #0a0a0a; stroke: none; }

.east { width: 286px; padding: 22px 11px 0 12px; background: #e2e2e2; }
.chk { display: flex; align-items: center; height: 28px; padding-left: 5px; background: #eee; font-size: 11.2px; -webkit-text-stroke: .3px #000; }
.chk i { width: 15px; height: 15px; margin-right: 5px; background: #ccc; }
.utc { display: flex; flex-direction: column; align-items: center; height: 55px; margin-top: 15px; border: 1px solid #000; }
.utc span { font-size: 12.8px; line-height: 16px; margin-top: 5px; }
.utc b { font-size: 28.8px; line-height: 31px; }
.east em { display: block; margin-top: 11px; height: 39px; text-align: center; font-size: 11.2px; line-height: 12px; padding: 0 12px; }
.device { display: flex; flex-direction: column; align-items: center; height: 398px; background: #000; color: #fff; font-size: 16px; text-align: center; }
.dv1 { line-height: 18px; margin-top: 31px; }
.dv2 { line-height: 18px; margin-top: 16px; }
.face { width: 192px; height: 192px; margin: 4px 2px 0 0; }
.num { font-size: 14px; fill: #444; text-anchor: middle; }
.dt { font-size: 22.4px; line-height: 26px; margin-top: 8px; }
.dv3 { line-height: 18px; margin-top: 17px; }
.at { margin: 20px 0 0 5px; width: 227px; }
.at h3 { font-size: 10.800px; line-height: 13px; letter-spacing: .25px; white-space: nowrap; }
.at p { margin-top: 4px; }
.at .time i { width: 11px; margin-right: 5px; }
.east hr { border: 0; height: 1px; background: #000; margin: 35px 0 15px; }
.lnk { display: block; width: max-content; color: #000; font-size: 16px; line-height: 18px; margin-bottom: 10px; }
.note { display: flex; gap: 3px; font-size: 11.2px; line-height: 13px; margin-top: -1px; white-space: nowrap; }
.note span { padding-top: 2px; }
.note2 { font-size: 11.2px; line-height: 17px; margin-top: 12px; }

/* overlays */
.fab { position: absolute; right: 14px; top: 94px; width: 44px; height: 42px; display: flex; align-items: center; padding-left: 15px; background: #fff; border-radius: 21px 0 0 21px; box-shadow: 0 2px 5px rgba(0, 0, 0, .35); overflow: hidden; }
.fab svg { flex: none; }
.popup { position: absolute; left: 1390px; top: 81px; width: 302px; height: 88px; border-radius: 11px; background: #fff; box-shadow: 0 0 3px rgba(0, 0, 0, .35), 0 2px 5px rgba(0, 0, 0, .2); overflow: hidden; font-family: "Open Sans", "Noto Sans", sans-serif; }
.pop-top { display: flex; height: 47px; padding-left: 16px; font-size: 12px; font-weight: 600; color: #444; }
.lang { width: 101px; height: 39px; line-height: 47px; text-align: center; border-bottom: 1px solid #dadce0; }
.lang.on { width: 100px; color: #0b57d0; border-bottom: 2px solid #0b57d0; }
.pd { width: 4px; height: 15px; margin: 16px 0 0 18px; }
.px { width: 11px; height: 11px; margin: 18px 0 0 27px; }
.pop-bot { height: 41px; padding-left: 19px; background: #f1f1f1; border-top: 1px solid #dde; font-size: 11.500px; line-height: 33px; color: #5f6368; letter-spacing: -.2px; }
.pop-bot span { font-size: 12.500px; letter-spacing: -.5px; }
```
